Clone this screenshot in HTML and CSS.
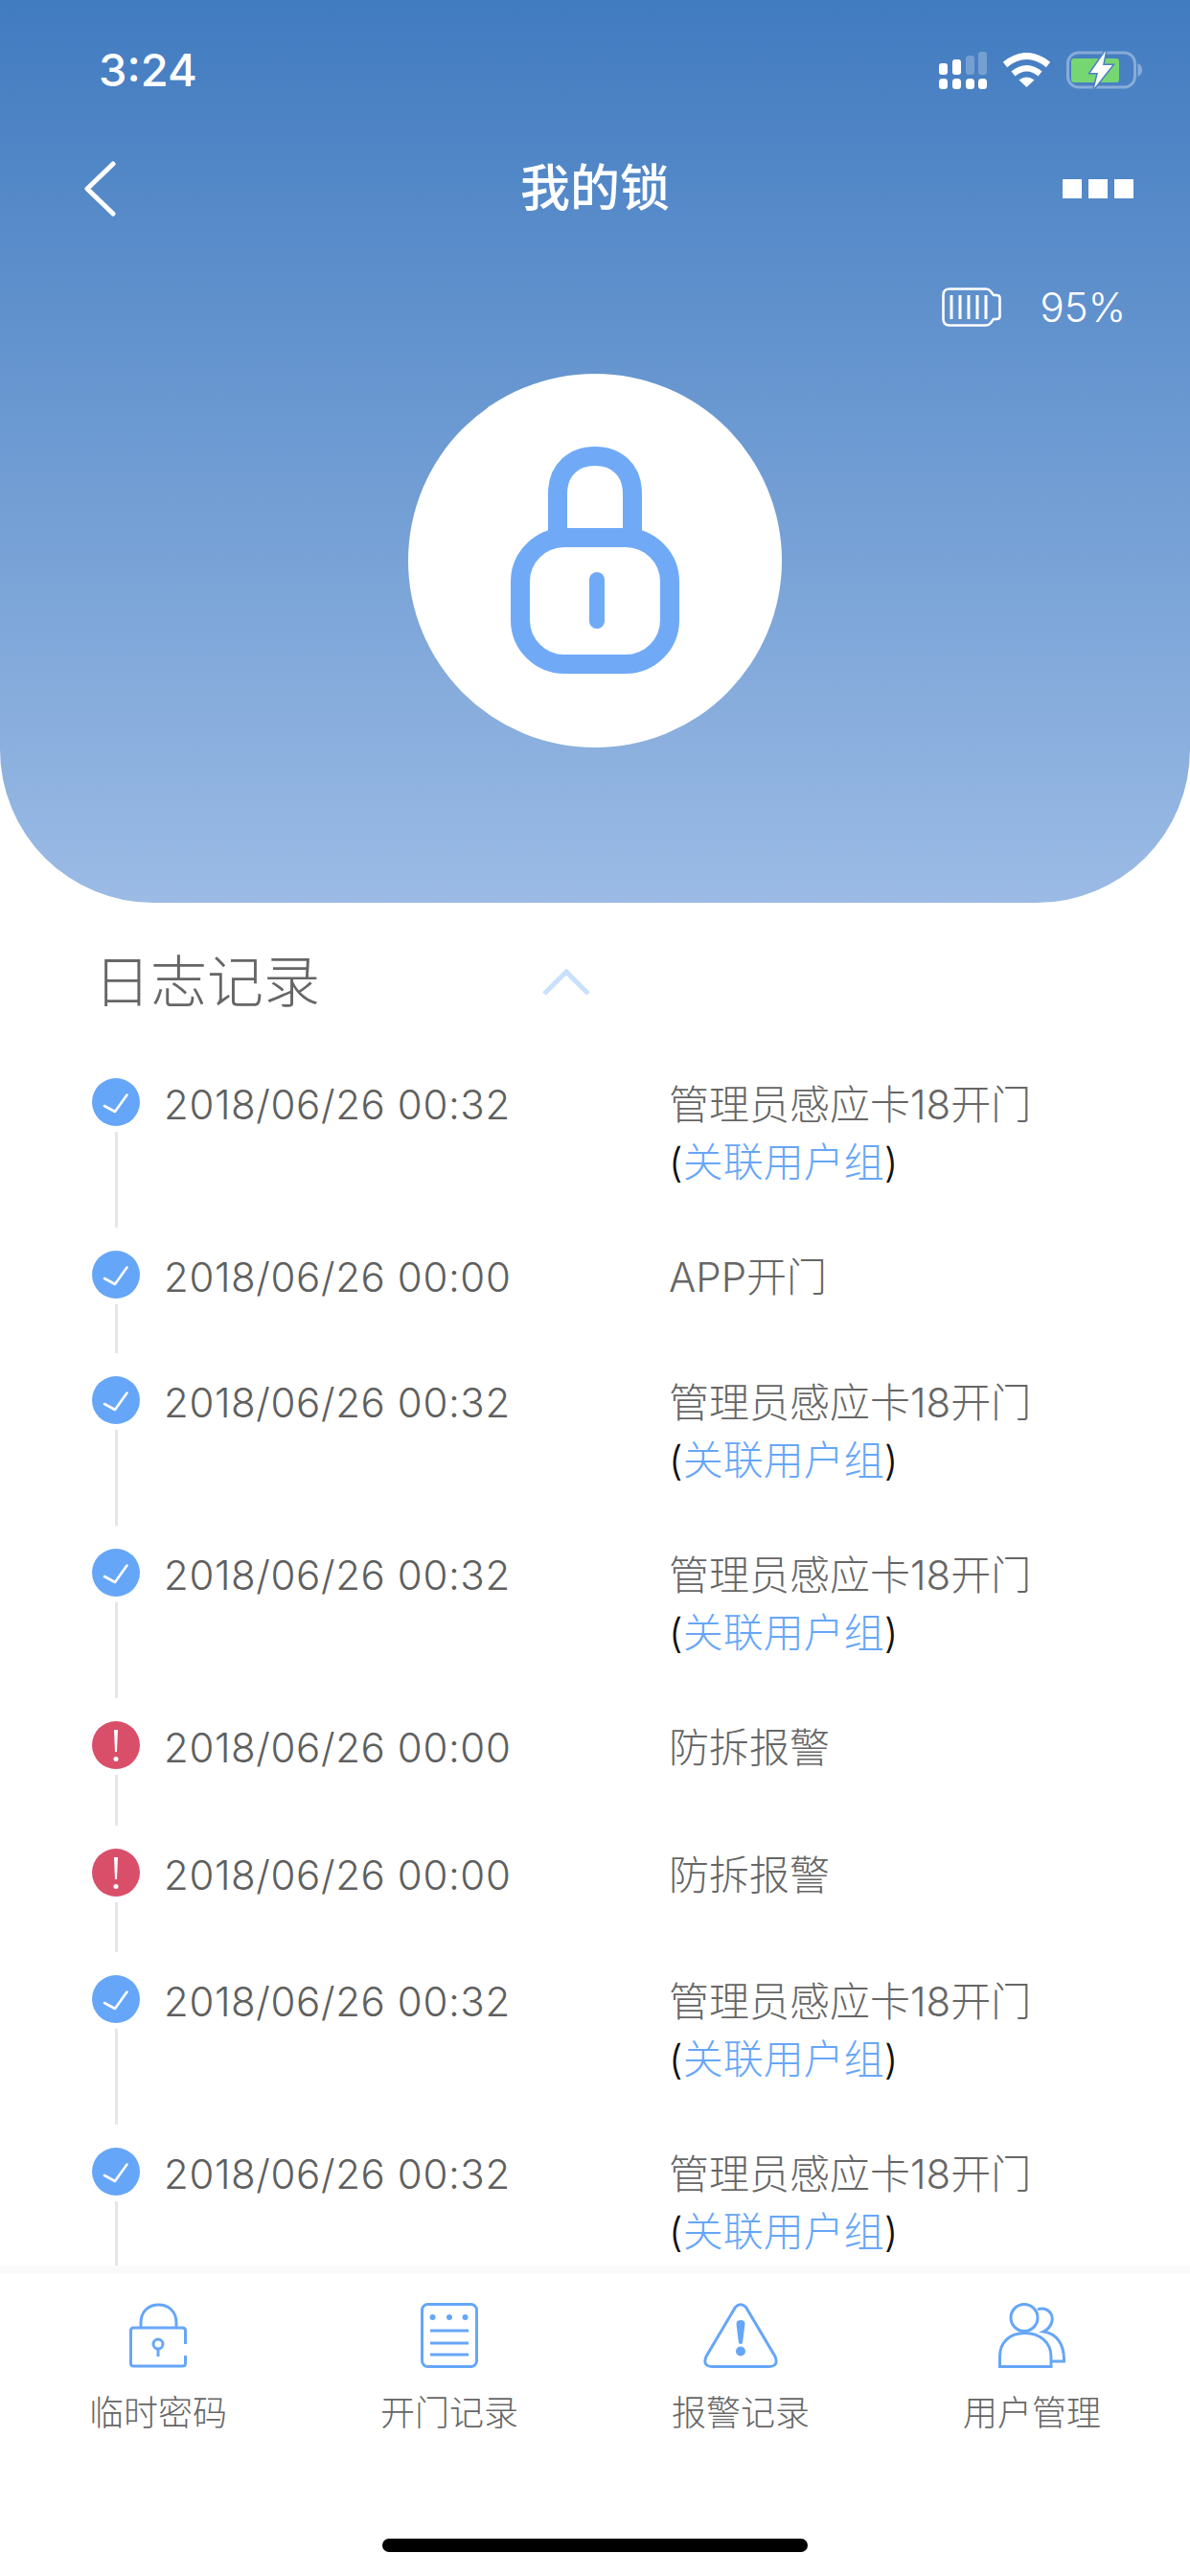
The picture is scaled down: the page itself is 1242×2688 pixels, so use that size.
FILE: index.html
```html
<!DOCTYPE html>
<html lang="zh-CN">
<head>
  <meta charset="UTF-8" />
  <meta name="viewport" content="width=device-width, initial-scale=1.0"/>
  <title>我的锁</title>
  <link rel="stylesheet" href="styles.css">
</head>
<body>
  <!-- shared marks for the log rows -->
  <svg class="defs" aria-hidden="true">
    <symbol id="ok" viewBox="0 0 50 50">
      <circle cx="25" cy="25" r="25" fill="#66a6f8"/>
      <path d="M13 29 L24 35 L36.500 17.500" fill="none" stroke="#fff" stroke-width="2.600" stroke-linecap="round" stroke-linejoin="round"/>
    </symbol>
    <symbol id="alert" viewBox="0 0 50 50">
      <circle cx="25" cy="25" r="25" fill="#d94f69"/>
      <path d="M23 9 H27 L26 32 H24 Z" fill="#fff"/>
      <circle cx="25" cy="39.500" r="2.500" fill="#fff"/>
    </symbol>
  </svg>

  <div class="page">
    <div class="header">
      <div class="status">
        <span class="time">3:24</span>
        <div class="status-icons">
          <svg class="signal" width="50" height="39" viewBox="0 0 50 39" fill="#fff">
            <rect x="0" y="12" width="9" height="12" rx="3"/>
            <rect x="14" y="8" width="9" height="16" rx="3"/>
            <rect x="28" y="4" width="9" height="20" rx="3" opacity=".25"/>
            <rect x="41" y="0" width="9" height="24" rx="3" opacity=".25"/>
            <rect x="0" y="28" width="9" height="11" rx="3.500"/>
            <rect x="14" y="28" width="9" height="11" rx="3.500"/>
            <rect x="28" y="28" width="9" height="11" rx="3.500"/>
            <rect x="41" y="28" width="9" height="11" rx="3.500"/>
          </svg>
          <svg class="wifi" width="51" height="36" viewBox="0 0 51 36">
            <path d="M3 12.500 Q25.500 -5.500 48 12.500" fill="none" stroke="#fff" stroke-width="7"/>
            <path d="M11.500 22 Q25.500 10.500 39.500 22" fill="none" stroke="#fff" stroke-width="6.500"/>
            <path d="M17.500 28.500 Q25.500 22.500 33.500 28.500 L25.500 36 Z" fill="#fff"/>
          </svg>
          <svg class="charge" width="80" height="40" viewBox="0 0 80 40">
            <rect x="1.500" y="2" width="70" height="36" rx="11" fill="none" stroke="#fff" stroke-opacity=".35" stroke-width="3"/>
            <path d="M74.500 13 Q79 15 79 20 Q79 25 74.500 27 Z" fill="#fff" fill-opacity=".35"/>
            <rect x="5" y="8" width="50" height="25" rx="3" fill="#76d672"/>
            <path d="M41 0 L25 23 H33 L29 39 L48 15 H38 Z" fill="#fff" stroke="#4a80c4" stroke-width="3" stroke-linejoin="miter" paint-order="stroke"/>
          </svg>
        </div>
      </div>

      <div class="nav">
        <svg class="back" width="34" height="58" viewBox="0 0 34 58">
          <path d="M31 3 L4 29 L31 55" fill="none" stroke="#fff" stroke-width="5" stroke-linecap="round" stroke-linejoin="round"/>
        </svg>
        <h1 class="title">我的锁</h1>
        <div class="more">
          <span></span><span></span><span></span>
        </div>
      </div>

      <div class="power">
        <svg width="62" height="41" viewBox="0 0 62 41" fill="none" stroke="#fff">
          <path d="M8 1.500 H46 Q49 1.500 51 4 L54 8 H57 Q60.500 8 60.500 11 V30 Q60.500 33 57 33 H54 L51 37 Q49 39.500 46 39.500 H8 Q1.500 39.500 1.500 33 V8 Q1.500 1.500 8 1.500 Z" stroke-width="2.600"/>
          <path d="M10 8 V33 M19 8 V33 M28 8 V33 M37 8 V33 M46 8 V33" stroke-width="3"/>
        </svg>
        <span class="percent">95%</span>
      </div>

      <div class="lock-circle">
        <svg width="176" height="237" viewBox="0 0 176 237" fill="none" stroke="#70aaf7" stroke-width="20">
          <path d="M49 94 V49 C49 24 66 10 88 10 C110 10 127 24 127 49 V94"/>
          <rect x="10" y="95" width="156" height="132" rx="46"/>
          <path d="M90 139 V182" stroke-width="16" stroke-linecap="round"/>
        </svg>
      </div>
    </div>

    <div class="logs">
      <div class="logs-head">
        <h2>日志记录</h2>
        <svg class="fold" width="50" height="28" viewBox="0 0 50 28">
          <path d="M2 26 L25 3 L48 26" fill="none" stroke="#c9e0fb" stroke-width="5"/>
        </svg>
      </div>

      <div class="log-row tall">
        <div class="marker"><svg class="dot"><use href="#ok"/></svg><div class="line"></div></div>
        <div class="date">2018/06/26 00:32</div>
        <div class="what">管理员感应卡18开门<br><span class="paren">(</span><a href="#">关联用户组</a><span class="paren">)</span></div>
      </div>
      <div class="log-row">
        <div class="marker"><svg class="dot"><use href="#ok"/></svg><div class="line"></div></div>
        <div class="date">2018/06/26 00:00</div>
        <div class="what">APP开门</div>
      </div>
      <div class="log-row tall">
        <div class="marker"><svg class="dot"><use href="#ok"/></svg><div class="line"></div></div>
        <div class="date">2018/06/26 00:32</div>
        <div class="what">管理员感应卡18开门<br><span class="paren">(</span><a href="#">关联用户组</a><span class="paren">)</span></div>
      </div>
      <div class="log-row tall">
        <div class="marker"><svg class="dot"><use href="#ok"/></svg><div class="line"></div></div>
        <div class="date">2018/06/26 00:32</div>
        <div class="what">管理员感应卡18开门<br><span class="paren">(</span><a href="#">关联用户组</a><span class="paren">)</span></div>
      </div>
      <div class="log-row alarm">
        <div class="marker"><svg class="dot"><use href="#alert"/></svg><div class="line"></div></div>
        <div class="date">2018/06/26 00:00</div>
        <div class="what">防拆报警</div>
      </div>
      <div class="log-row alarm">
        <div class="marker"><svg class="dot"><use href="#alert"/></svg><div class="line"></div></div>
        <div class="date">2018/06/26 00:00</div>
        <div class="what">防拆报警</div>
      </div>
      <div class="log-row tall">
        <div class="marker"><svg class="dot"><use href="#ok"/></svg><div class="line"></div></div>
        <div class="date">2018/06/26 00:32</div>
        <div class="what">管理员感应卡18开门<br><span class="paren">(</span><a href="#">关联用户组</a><span class="paren">)</span></div>
      </div>
      <div class="log-row tall">
        <div class="marker"><svg class="dot"><use href="#ok"/></svg><div class="line"></div></div>
        <div class="date">2018/06/26 00:32</div>
        <div class="what">管理员感应卡18开门<br><span class="paren">(</span><a href="#">关联用户组</a><span class="paren">)</span></div>
      </div>
    </div>

    <div class="tabs">
      <div class="tab">
        <svg width="60" height="68" viewBox="0 0 60 68" fill="none" stroke="#66a6f8" stroke-width="3">
          <path d="M12 26 V21 C12 9 20 2 30.500 2 C41 2 49 9 49 21 V26"/>
          <path d="M58.500 43 V29 Q58.500 26 55.500 26 H4.500 Q1.500 26 1.500 29 V63 Q1.500 66 4.500 66 H55.500 Q58.500 66 58.500 63 V55"/>
          <circle cx="30" cy="43" r="5"/>
          <path d="M30 48 V56"/>
        </svg>
        <span>临时密码</span>
      </div>
      <div class="tab">
        <svg width="60" height="68" viewBox="0 0 60 68" fill="none" stroke="#66a6f8" stroke-width="3">
          <rect x="1.500" y="1.500" width="57" height="65" rx="6"/>
          <circle cx="12.500" cy="15" r="3" fill="#66a6f8" stroke="none"/>
          <circle cx="30" cy="15" r="3" fill="#66a6f8" stroke="none"/>
          <circle cx="46.500" cy="15" r="3" fill="#66a6f8" stroke="none"/>
          <path d="M10 29 H50 M10 42 H50 M10 54 H50"/>
        </svg>
        <span>开门记录</span>
      </div>
      <div class="tab">
        <svg width="78" height="68" viewBox="0 0 78 68" fill="none" stroke="#66a6f8" stroke-width="3">
          <path d="M33.500 4.500 Q39 -1 44.500 4.500 L75 56 Q79 66 69 66.500 H9 Q-1 66 3 56 Z"/>
          <path d="M34.500 22 Q34.500 18 39 18 Q43.500 18 43.500 22 L41 42 Q39 44 37 42 Z" fill="#66a6f8" stroke="none"/>
          <circle cx="39" cy="50.500" r="5" fill="#66a6f8" stroke="none"/>
        </svg>
        <span>报警记录</span>
      </div>
      <div class="tab">
        <svg width="70" height="68" viewBox="0 0 70 68" fill="none" stroke="#66a6f8" stroke-width="3">
          <circle cx="27" cy="15.500" r="14"/>
          <path d="M1.500 66.500 V56 C1.500 41 12 31.500 27.500 31.500 C43 31.500 55 41 55 56 V66.500 Z"/>
          <path d="M41 7 C45 5 51 6 54 10 C58 15 57 25 47 30 C60 32 69 42 68.500 61 H55"/>
        </svg>
        <span>用户管理</span>
      </div>
    </div>

    <div class="home-area">
      <div class="home-bar"></div>
    </div>
  </div>
</body>
</html>
```

FILE: styles.css
```css
* {
  box-sizing: border-box;
}

body {
  margin: 0;
  background-color: #fff;
  font-family: Inter, 'Noto Sans CJK SC', sans-serif;
  color: #666;
}

.defs {
  display: none;
}

.page {
  width: 1242px;
  height: 2688px;
  display: flex;
  flex-direction: column;
  overflow: hidden;
}

/* blue top part */
.header {
  flex: none;
  height: 942px;
  padding-top: 53px;
  background: linear-gradient(180deg, #417bc0 0%, #9bbbe5 100%);
  border-radius: 0 0 160px 160px;
  color: #fff;
}

.status {
  height: 40px;
  padding: 0 49px 0 103px;
  display: flex;
  justify-content: space-between;
  align-items: center;
}

.time {
  font-size: 47px;
  font-weight: 500;
  line-height: 40px;
}

.status-icons {
  display: flex;
  align-items: center;
  gap: 16px;
}

.nav {
  height: 58px;
  margin-top: 75px;
  padding: 0 59px;
  display: grid;
  grid-template-columns: 1fr auto 1fr;
  align-items: center;
}

.back {
  margin-left: 28px;
}

.title {
  margin: 0;
  font-size: 52px;
  font-weight: 500;
  line-height: 58px;
}

.more {
  display: flex;
  justify-content: flex-end;
  gap: 7px;
}

.more span {
  width: 20px;
  height: 20px;
  background-color: #fff;
}

.power {
  height: 41px;
  margin-top: 74px;
  padding-right: 67px;
  display: flex;
  justify-content: flex-end;
  align-items: center;
  gap: 40px;
}

.percent {
  font-size: 42px;
  font-weight: 300;
  line-height: 41px;
}

.lock-circle {
  width: 390px;
  height: 390px;
  margin: 49px auto 0;
  padding-top: 76px;
  border-radius: 50%;
  background-color: #fff;
  display: flex;
  justify-content: center;
  align-items: flex-start;
}

/* log list, runs under the tab bar */
.logs {
  flex: 1;
  min-height: 0;
  overflow: hidden;
}

.logs-head {
  height: 70px;
  margin: 48px 0 65px;
  padding-left: 98px;
  display: flex;
  align-items: center;
}

.logs-head h2 {
  margin: 0;
  font-size: 59px;
  font-weight: 300;
  line-height: 70px;
}

.fold {
  margin-left: 232px;
}

.log-row {
  height: 131px;
  padding-left: 96px;
  display: flex;
  font-size: 42px;
  font-weight: 300;
  line-height: 60px;
}

.log-row.tall {
  height: 180px;
}

.log-row.alarm {
  height: 132.5px;
}

.marker {
  width: 50px;
  flex: none;
  display: flex;
  flex-direction: column;
  align-items: center;
}

.dot {
  width: 50px;
  height: 50px;
  flex: none;
}

.line {
  flex: 1;
  width: 3px;
  margin: 6px 0 24px;
  background-color: #e6e6e6;
}

.date {
  width: 552px;
  margin-top: -2px;
  padding-left: 25px;
  flex: none;
  letter-spacing: .6px;
  color: #5f5f5f;
}

.what {
  margin-top: -2px;
}

.what a {
  color: #66a6f8;
  text-decoration: none;
}

.paren {
  color: #111;
}

/* bottom tabs */
.tabs {
  flex: none;
  height: 197px;
  padding: 30px 13px 0;
  border-top: 9px solid #fafafa;
  background-color: #fff;
  display: grid;
  grid-template-columns: repeat(4, 1fr);
}

.tab {
  display: flex;
  flex-direction: column;
  align-items: center;
  font-size: 36px;
  font-weight: 300;
  line-height: 50px;
  gap: 22px;
}

.home-area {
  flex: none;
  height: 127px;
  padding-top: 88px;
  background-color: #fff;
}

.home-bar {
  width: 444px;
  height: 14px;
  margin: 0 auto;
  border-radius: 7px;
  background-color: #000;
}
```
